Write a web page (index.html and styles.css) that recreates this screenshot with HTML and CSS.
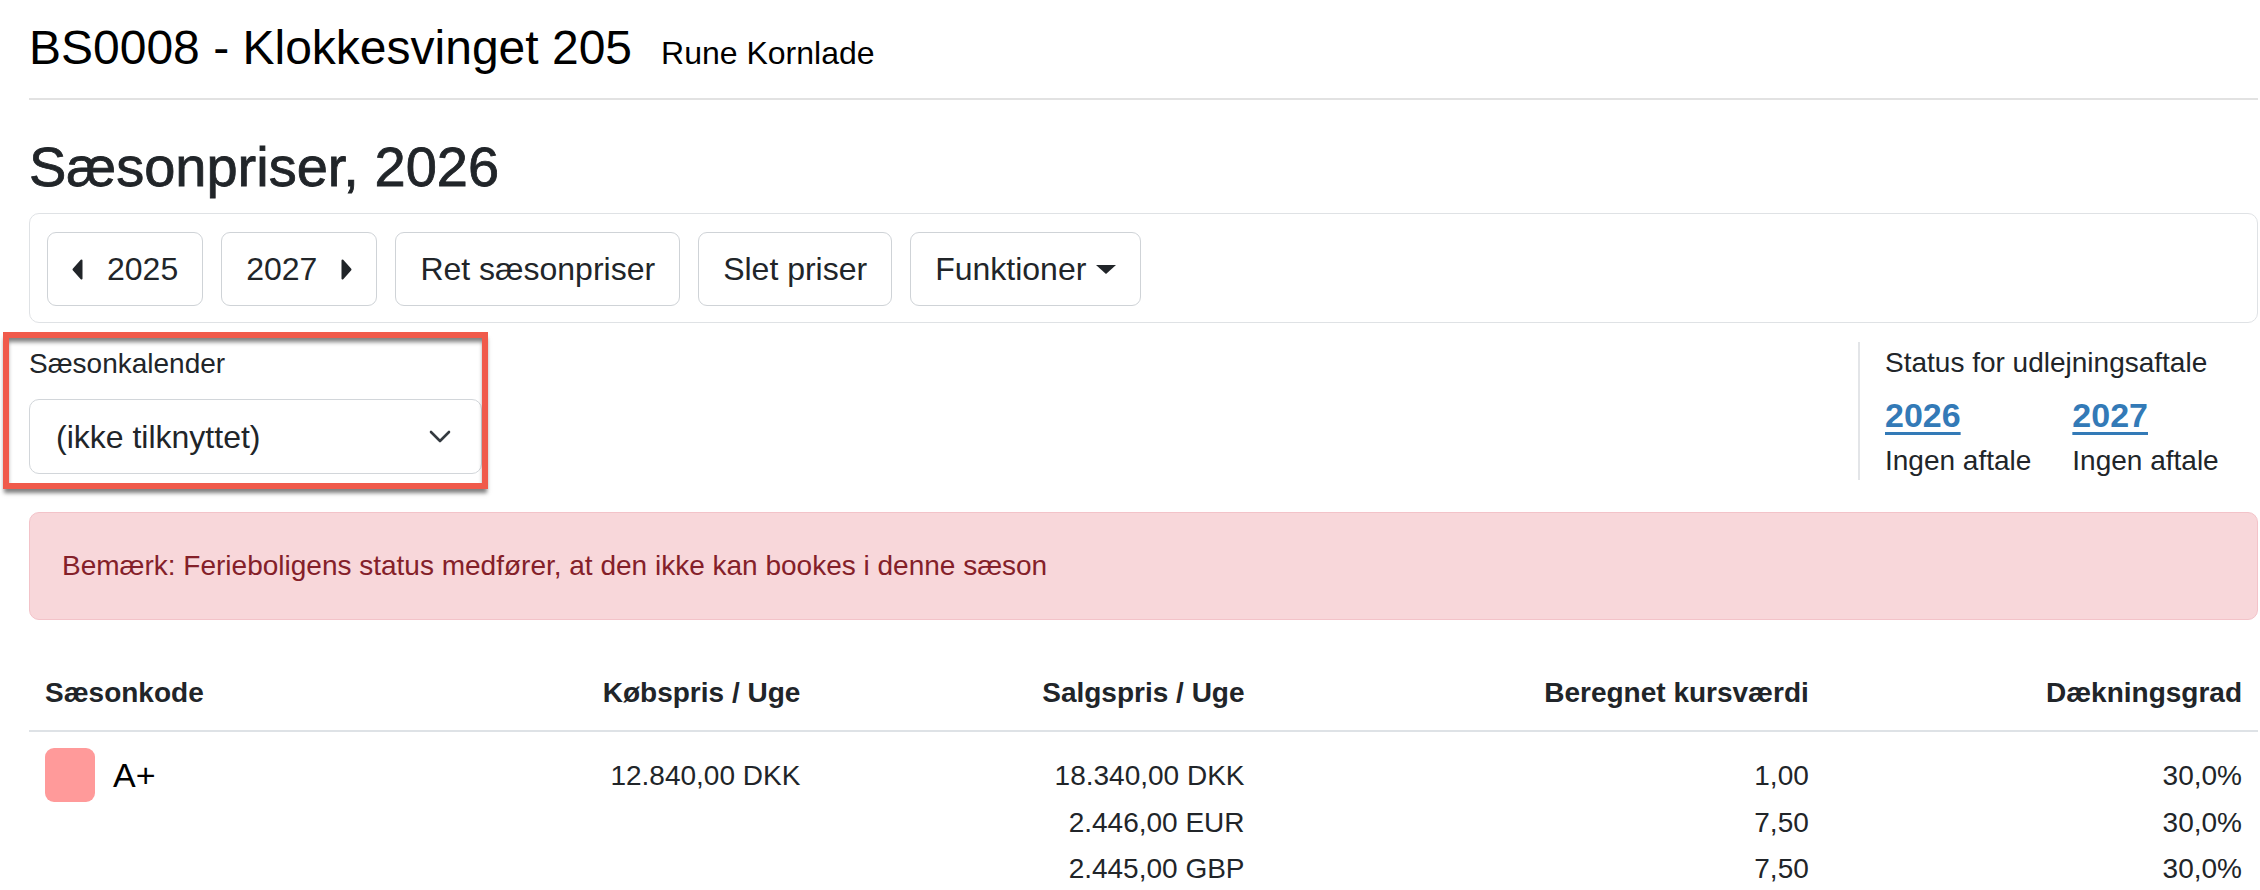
FILE: index.html
```html
<!DOCTYPE html>
<html lang="da">
<head>
    <meta charset="UTF-8">
    <title>Sæsonpriser, 2026</title>
    <link rel="stylesheet" href="styles.css">
</head>
<body>
    <div class="page">
        <h1 class="title">BS0008 - Klokkesvinget 205<small>Rune Kornlade</small></h1>
        <hr class="rule">
        <h2 class="heading">Sæsonpriser, 2026</h2>

        <div class="toolbar">
            <button class="btn">
                <svg class="caret" viewBox="0 0 11 21" width="11" height="21"><path d="M9.5 1.5 L1.5 10.5 L9.5 19.5 Z" fill="currentColor" stroke="currentColor" stroke-width="2" stroke-linejoin="round"/></svg>
                2025
            </button>
            <button class="btn">
                2027
                <svg class="caret" viewBox="0 0 11 21" width="11" height="21"><path d="M1.5 1.5 L9.5 10.5 L1.5 19.5 Z" fill="currentColor" stroke="currentColor" stroke-width="2" stroke-linejoin="round"/></svg>
            </button>
            <button class="btn">Ret sæsonpriser</button>
            <button class="btn">Slet priser</button>
            <button class="btn">Funktioner<span class="dropdown-caret"></span></button>
        </div>

        <div class="settings">
            <div class="field marked">
                <label class="field-label">Sæsonkalender</label>
                <div class="select">
                    <span>(ikke tilknyttet)</span>
                    <svg class="chevron" viewBox="0 0 22 13" width="22" height="13"><path d="M2 2l9 9 9-9" fill="none" stroke="#343a40" stroke-width="2.6" stroke-linecap="round" stroke-linejoin="round"/></svg>
                </div>
            </div>

            <div class="status">
                <div class="status-title">Status for udlejningsaftale</div>
                <div class="years">
                    <div class="year">
                        <a href="#" class="year-link">2026</a>
                        <span>Ingen aftale</span>
                    </div>
                    <div class="year">
                        <a href="#" class="year-link">2027</a>
                        <span>Ingen aftale</span>
                    </div>
                </div>
            </div>
        </div>

        <div class="alert">Bemærk: Ferieboligens status medfører, at den ikke kan bookes i denne sæson</div>

        <table class="prices">
            <colgroup>
                <col class="c-code">
                <col class="c-buy">
                <col class="c-sell">
                <col class="c-rate">
                <col class="c-margin">
            </colgroup>
            <thead>
                <tr>
                    <th class="left">Sæsonkode</th>
                    <th>Købspris / Uge</th>
                    <th>Salgspris / Uge</th>
                    <th>Beregnet kursværdi</th>
                    <th>Dækningsgrad</th>
                </tr>
            </thead>
            <tbody>
                <tr>
                    <td class="left">
                        <div class="code"><span class="swatch"></span><span class="code-name">A+</span></div>
                    </td>
                    <td class="num">
                        <div class="line">12.840,00 DKK</div>
                    </td>
                    <td class="num">
                        <div class="line">18.340,00 DKK</div>
                        <div class="line">2.446,00 EUR</div>
                        <div class="line">2.445,00 GBP</div>
                    </td>
                    <td class="num">
                        <div class="line">1,00</div>
                        <div class="line">7,50</div>
                        <div class="line">7,50</div>
                    </td>
                    <td class="num">
                        <div class="line">30,0%</div>
                        <div class="line">30,0%</div>
                        <div class="line">30,0%</div>
                    </td>
                </tr>
            </tbody>
        </table>
    </div>
</body>
</html>
```

FILE: styles.css
```css
body {
    margin: 0;
    font-family: "Liberation Sans", Arial, sans-serif;
    font-size: 28px;
    line-height: 42px;
    color: #212529;
    background: #fff;
}

.page {
    margin: 0 2px 0 29px;
}

.title {
    margin: 19px 0 0;
    font-size: 48px;
    font-weight: normal;
    line-height: 58px;
    color: #000;
}

.title small {
    margin-left: 29px;
    font-size: 32px;
    line-height: 1;
}

.rule {
    margin: 21px 0 0;
    border: 0;
    height: 2px;
    background: #e2e2e2;
}

.heading {
    margin: 33px 0 0;
    font-size: 56px;
    font-weight: normal;
    line-height: 67px;
    -webkit-text-stroke: 0.8px #212529;
}

.toolbar {
    margin-top: 13px;
    display: flex;
    gap: 18px;
    padding: 18px 17px 16px;
    border: 1px solid #dfe2e5;
    border-radius: 10px;
}

.btn {
    display: inline-flex;
    align-items: center;
    gap: 24px;
    height: 74px;
    padding: 0 24px;
    font-family: inherit;
    font-size: 32px;
    line-height: 48px;
    color: #212529;
    background: #fff;
    border: 1px solid #cfd3d7;
    border-radius: 9px;
}

.caret {
    display: block;
}

.dropdown-caret {
    margin-left: -14px;
    width: 0;
    height: 0;
    border-top: 9px solid #212529;
    border-left: 10px solid transparent;
    border-right: 10px solid transparent;
}

.settings {
    margin-top: 19px;
    display: flex;
    justify-content: space-between;
    align-items: flex-start;
}

.field {
    width: 453px;
    padding-top: 1px;
}

.marked {
    position: relative;
}

.marked::after {
    content: "";
    position: absolute;
    left: -26px;
    right: -6px;
    top: -10px;
    bottom: -15px;
    border: 6px solid #f05a4b;
    box-shadow: 0 5px 4px -1px rgba(0, 0, 0, 0.5), inset 0 5px 4px -1px rgba(0, 0, 0, 0.5);
    pointer-events: none;
}

.field-label {
    display: block;
}

.select {
    margin-top: 14px;
    height: 75px;
    box-sizing: border-box;
    display: flex;
    align-items: center;
    justify-content: space-between;
    padding: 0 30px 0 26px;
    font-size: 32px;
    line-height: 48px;
    border: 1px solid #d2d6da;
    border-radius: 10px;
}

.chevron {
    display: block;
}

.status {
    width: 400px;
    box-sizing: border-box;
    height: 138px;
    padding-left: 25px;
    border-left: 2px solid #e3e5e8;
}

.years {
    display: flex;
    gap: 41px;
}

.year {
    display: flex;
    flex-direction: column;
}

.year-link {
    margin-top: 6px;
    font-size: 34px;
    font-weight: bold;
    line-height: 50px;
    color: #337ab7;
    text-decoration: underline;
    text-decoration-thickness: 3px;
    text-underline-offset: 5px;
}

.alert {
    margin-top: 32px;
    padding: 32px;
    background: #f8d7da;
    border: 1px solid #f3c3c9;
    border-radius: 10px;
    color: #842029;
}

.prices {
    margin-top: 36px;
    width: 100%;
    table-layout: fixed;
    border-collapse: collapse;
}

.c-code { width: 393px; }
.c-buy { width: 394px; }
.c-sell { width: 444px; }
.c-rate { width: 564px; }
.c-margin { width: 433px; }

.prices th {
    padding: 16px;
    text-align: right;
    font-weight: bold;
    border-bottom: 2px solid #dee2e6;
}

.prices td {
    padding: 16px;
    text-align: right;
    vertical-align: top;
}

.prices .left {
    text-align: left;
}

.prices td.num {
    padding-top: 21px;
}

.line {
    line-height: 46.5px;
}

.code {
    display: flex;
    align-items: center;
    gap: 18px;
}

.swatch {
    width: 50px;
    height: 54px;
    border-radius: 9px;
    background: #ff9a9a;
}

.code-name {
    font-size: 34px;
    color: #000;
}
```
